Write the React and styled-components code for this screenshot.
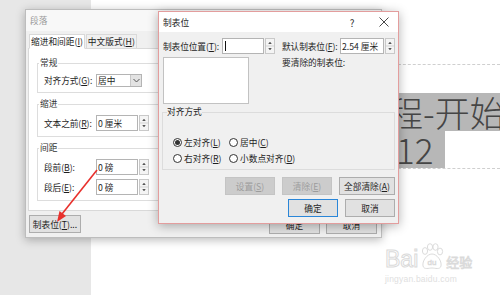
import React from 'react'
import styled, { createGlobalStyle } from 'styled-components'

const GlobalStyle = createGlobalStyle`
  html, body { margin: 0; padding: 0; }
  body {
    width: 500px;
    height: 295px;
    overflow: hidden;
    font-family: "Noto Sans CJK SC", "Noto Sans", sans-serif;
    font-size: 8.7px;
    color: #1e1e1e;
  }
  * { box-sizing: border-box; }
`

const Spinner = () => (
    <SpinBtns>
        <svg width="9" height="14" viewBox="0 0 9 14">
            <line x1="0" y1="7" x2="9" y2="7" stroke="#cfcfcf" />
            <polygon points="2.5,4.5 6.5,4.5 4.5,2.5" fill="#222" />
            <polygon points="2.5,9.5 6.5,9.5 4.5,11.5" fill="#222" />
        </svg>
    </SpinBtns>
)

const SpinField = ({value, width, caret}) => (
    <SpinBox $w={width}>
        <SpinText>{caret && <Caret />}{value}</SpinText>
        <Spinner />
    </SpinBox>
)

const Radio = ({checked, children}) => (
    <RadioItem>
        <RadioDot $checked={checked} />
        <span>{children}</span>
    </RadioItem>
)

const App = () => {
    return(
        <>
            <GlobalStyle />
            <Desktop>
                <SidePane />
                <Page>
                    <DocBlock>
                        <DocLine>程-开始</DocLine>
                        <DocLine2>12</DocLine2>
                    </DocBlock>
                </Page>

                <ParagraphDialog>
                    <TitleBar $inactive>段落</TitleBar>
                    <DialogBody>
                        <TabStrip>
                            <Tab $active>缩进和间距(<u>I</u>)</Tab>
                            <Tab>中文版式(<u>H</u>)</Tab>
                        </TabStrip>
                        <TabPanel>
                            <Group>
                                <Legend>常规</Legend>
                                <FormRow>
                                    <Label>对齐方式(<u>G</u>):</Label>
                                    <Select>
                                        <SelectText>居中</SelectText>
                                        <SelectArrow>
                                            <svg width="7" height="5" viewBox="0 0 7 5">
                                                <polyline points="0.5,1 3.5,4 6.5,1" fill="none" stroke="#555" strokeWidth="1" />
                                            </svg>
                                        </SelectArrow>
                                    </Select>
                                </FormRow>
                            </Group>
                            <Group>
                                <Legend>缩进</Legend>
                                <FormRow>
                                    <Label>文本之前(<u>R</u>):</Label>
                                    <SpinField value="0 厘米" width={53} />
                                </FormRow>
                            </Group>
                            <Group>
                                <Legend>间距</Legend>
                                <FormRow>
                                    <Label>段前(<u>B</u>):</Label>
                                    <SpinField value="0 磅" width={53} />
                                </FormRow>
                                <FormRow>
                                    <Label>段后(<u>E</u>):</Label>
                                    <SpinField value="0 磅" width={53} />
                                </FormRow>
                            </Group>
                        </TabPanel>
                        <Footer>
                            <Button $w={52}>制表位(<u>T</u>)...</Button>
                            <FooterRight>
                                <Button $w={51}>确定</Button>
                                <Button $w={51}>取消</Button>
                            </FooterRight>
                        </Footer>
                    </DialogBody>
                </ParagraphDialog>

                <TabsDialog>
                    <TitleBar>
                        <span>制表位</span>
                        <TitleButtons>
                            <HelpBtn>?</HelpBtn>
                            <CloseBtn>
                                <svg width="10" height="10" viewBox="0 0 10 10">
                                    <path d="M0.5 0.5 L9.5 9.5 M9.5 0.5 L0.5 9.5" stroke="#333" strokeWidth="0.9" />
                                </svg>
                            </CloseBtn>
                        </TitleButtons>
                    </TitleBar>
                    <TabsBody>
                        <TopGrid>
                            <div>
                                <InlineRow $label={59}>
                                    <Label>制表位位置(<u>T</u>):</Label>
                                    <SpinField value="" width={53} caret />
                                </InlineRow>
                                <ListBox />
                            </div>
                            <div>
                                <InlineRow $label={58}>
                                    <Label>默认制表位(<u>F</u>):</Label>
                                    <SpinField value="2.54 厘米" width={55} />
                                </InlineRow>
                                <ClearLabel>要清除的制表位:</ClearLabel>
                            </div>
                        </TopGrid>
                        <AlignGroup>
                            <AlignLegend>对齐方式</AlignLegend>
                            <RadioGrid>
                                <Radio checked>左对齐(<u>L</u>)</Radio>
                                <Radio>居中(<u>C</u>)</Radio>
                                <Radio>右对齐(<u>R</u>)</Radio>
                                <Radio>小数点对齐(<u>D</u>)</Radio>
                            </RadioGrid>
                        </AlignGroup>
                        <ButtonRow $top={7}>
                            <Button $w={50} disabled>设置(<u>S</u>)</Button>
                            <Button $w={50} disabled>清除(<u>E</u>)</Button>
                            <Button $w={56}>全部清除(<u>A</u>)</Button>
                        </ButtonRow>
                        <ButtonRow $top={4}>
                            <Button $w={50} $focus>确定</Button>
                            <Button $w={50}>取消</Button>
                        </ButtonRow>
                    </TabsBody>
                </TabsDialog>

                <ArrowLayer width="500" height="295" viewBox="0 0 500 295">
                    <line x1="97" y1="170" x2="62" y2="214" stroke="#e8302c" strokeWidth="1.6" />
                    <polygon points="57,222 66,216 59.5,211" fill="#e8302c" />
                </ArrowLayer>

                <Watermark>
                    <MarkTop>
                        <MarkBai>Bai</MarkBai>
                        <svg width="26" height="28" viewBox="0 0 26 28">
                            <g fill="none" stroke="#dcdcdc" strokeWidth="1">
                                <ellipse cx="6" cy="8" rx="2.6" ry="3.4" />
                                <ellipse cx="11" cy="4" rx="2.6" ry="3.3" />
                                <ellipse cx="16.5" cy="4" rx="2.6" ry="3.3" />
                                <ellipse cx="21" cy="8.5" rx="2.6" ry="3.4" />
                                <path d="M13 11 C8 11 3 18 4 23 C5 27 10 25 13 25 C16 25 21 27 22 23 C23 18 18 11 13 11 Z" />
                            </g>
                            <text x="13" y="22" textAnchor="middle" fontSize="8" fill="none" stroke="#d8d8d8" strokeWidth="0.6" fontFamily="Liberation Sans, sans-serif">du</text>
                        </svg>
                        <MarkJy>经验</MarkJy>
                    </MarkTop>
                    <MarkUrl>jingyan.baidu.com</MarkUrl>
                </Watermark>
            </Desktop>
        </>
    )
}

const Desktop = styled.div`
    position: relative;
    width: 500px;
    height: 295px;
    display: grid;
    grid-template-columns: 91px 1fr;
    overflow: hidden;
`

const SidePane = styled.div`
    background: #e7e7e7;
`

const Page = styled.div`
    background: #ffffff;
    padding-top: 64px;
    min-width: 0;
    overflow: hidden;
`

const DocBlock = styled.div`
    margin-left: 297px;
    border-top: 1px dashed #cfcfcf;
    border-bottom: 1px dashed #cfcfcf;
    padding-top: 28px;
    font-size: 35px;
    font-weight: 300;
    color: #454545;
    line-height: 37px;
    white-space: nowrap;
`

const DocLine = styled.div`
    background: #b7b7b7;
    height: 38px;
    line-height: 38px;
`

const DocLine2 = styled.div`
    display: inline-block;
    vertical-align: top;
    background: #b7b7b7;
    height: 37px;
    line-height: 35px;
    padding: 0 12px 0 8px;
`

const Window = styled.div`
    position: absolute;
    background: #f0f0f0;
    display: flex;
    flex-direction: column;
`

const ParagraphDialog = styled(Window)`
    left: 25px;
    top: 9px;
    width: 357px;
    height: 229px;
    border: 1px solid #bdbdbd;
    box-shadow: 0 2px 9px rgba(0,0,0,0.28);
`

const TabsDialog = styled(Window)`
    left: 158px;
    top: 11px;
    width: 241px;
    height: 213px;
    border: 1px solid #e39d9d;
    box-shadow: 0 2px 10px rgba(0,0,0,0.3);
`

const TitleBar = styled.div`
    height: ${p => p.$inactive ? 21 : 20}px;
    flex: none;
    display: flex;
    align-items: center;
    padding-left: 4px;
    background: ${p => p.$inactive ? '#f8f8f8' : '#ffffff'};
    color: ${p => p.$inactive ? '#9a9a9a' : '#1e1e1e'};
`

const TitleButtons = styled.div`
    margin-left: auto;
    display: flex;
    height: 100%;
`

const HelpBtn = styled.div`
    width: 36px;
    display: flex;
    align-items: center;
    justify-content: center;
    font-size: 10px;
    color: #333;
`

const CloseBtn = styled(HelpBtn)`
    width: 28px;
`

const Label = styled.span`
    white-space: nowrap;
    letter-spacing: -0.1px;
`

const DialogBody = styled.div`
    flex: 1;
    display: flex;
    flex-direction: column;
    padding: 0 4px 0 2px;
`

const TabStrip = styled.div`
    display: flex;
    margin: 3px 0 -1px 1px;
    position: relative;
    z-index: 1;
`

const Tab = styled.div`
    height: 15px;
    line-height: 14px;
    padding: 0 1px;
    white-space: nowrap;
    border: 1px solid #d9d9d9;
    border-bottom: ${p => p.$active ? '1px solid #fff' : '1px solid #d9d9d9'};
    background: ${p => p.$active ? '#ffffff' : '#f0f0f0'};
    margin-right: 1px;
`

const TabPanel = styled.div`
    height: 163px;
    background: #ffffff;
    border: 1px solid #d9d9d9;
    padding: 9px 8px 0;
    display: flex;
    flex-direction: column;
    gap: 6px;
`

const Group = styled.fieldset`
    margin: 0;
    min-width: 0;
    border: 1px solid #dddddd;
    padding: 6px 6px 5px;
    display: flex;
    flex-direction: column;
    gap: 4px;
`

const Legend = styled.legend`
    padding: 0 1px;
    margin-left: -5px;
    line-height: 10px;
    height: 10px;
    color: #333;
`

const FormRow = styled.div`
    display: grid;
    grid-template-columns: 52px auto;
    align-items: center;
    justify-items: start;
`

const Select = styled.div`
    width: 46px;
    height: 13px;
    border: 1px solid #b4b4b4;
    background: #fff;
    display: flex;
`

const SelectText = styled.div`
    flex: 1;
    padding-left: 1px;
    line-height: 11px;
`

const SelectArrow = styled.div`
    width: 11px;
    background: #e3e3e3;
    border-left: 1px solid #c8c8c8;
    display: flex;
    align-items: center;
    justify-content: center;
`

const SpinBox = styled.div`
    width: ${p => p.$w}px;
    height: 16px;
    display: flex;
    gap: 1px;
`

const SpinText = styled.div`
    flex: 1;
    background: #fff;
    border: 1px solid #b4b4b4;
    padding-left: 1px;
    line-height: 13px;
    white-space: nowrap;
    display: flex;
    align-items: center;
`

const Caret = styled.span`
    width: 1px;
    height: 10px;
    background: #111;
    margin-left: 1px;
`

const SpinBtns = styled.div`
    width: 10px;
    background: #f4f4f4;
    border: 1px solid #c9c9c9;
    display: flex;
    align-items: center;
    justify-content: center;
`

const Footer = styled.div`
    display: flex;
    align-items: flex-start;
    margin-top: 4px;
    padding-left: 1px;
`

const FooterRight = styled.div`
    margin-left: auto;
    margin-top: 1px;
    display: flex;
    gap: 6px;
`

const Button = styled.div`
    width: ${p => p.$w}px;
    height: 18px;
    flex: none;
    display: flex;
    align-items: center;
    justify-content: center;
    white-space: nowrap;
    background: ${p => p.disabled ? '#cccccc' : '#e1e1e1'};
    border: 1px solid ${p => p.disabled ? '#c4c4c4' : p.$focus ? '#2a86d8' : '#adadad'};
    color: ${p => p.disabled ? '#9c9c9c' : '#1e1e1e'};
`

const TabsBody = styled.div`
    flex: 1;
    display: flex;
    flex-direction: column;
    padding: 6px 3px 0 4px;
`

const TopGrid = styled.div`
    display: grid;
    grid-template-columns: 119px 1fr;
`

const InlineRow = styled.div`
    display: grid;
    grid-template-columns: ${p => p.$label}px auto;
    align-items: center;
    justify-items: start;
`

const ListBox = styled.div`
    width: 86px;
    height: 47px;
    margin-top: 3px;
    background: #fff;
    border: 1px solid #c2c2c2;
`

const ClearLabel = styled.div`
    margin-top: 3px;
    line-height: 12px;
`

const AlignGroup = styled.fieldset`
    margin: 3px 0 0 -1px;
    min-width: 0;
    border: 1px solid #dcdcdc;
    padding: 19px 10px 5px;
`

const AlignLegend = styled.legend`
    padding: 0;
    margin-left: -6px;
    height: 10px;
    line-height: 10px;
`

const RadioGrid = styled.div`
    display: grid;
    grid-template-columns: 56px auto;
    row-gap: 4px;
`

const RadioItem = styled.div`
    display: flex;
    align-items: center;
    gap: 2px;
    height: 12px;
    white-space: nowrap;
`

const RadioDot = styled.span`
    width: 9px;
    height: 9px;
    border-radius: 50%;
    border: 1px solid #333;
    background: #fff;
    display: flex;
    align-items: center;
    justify-content: center;
    &::after{
        content: '';
        width: 5px;
        height: 5px;
        border-radius: 50%;
        background: ${p => p.$checked ? '#333' : 'transparent'};
    }
`

const ButtonRow = styled.div`
    display: flex;
    justify-content: flex-end;
    gap: 7px;
    margin-top: ${p => p.$top}px;
`

const ArrowLayer = styled.svg`
    position: absolute;
    left: 0;
    top: 0;
    pointer-events: none;
`

const Watermark = styled.div`
    position: absolute;
    left: 385px;
    top: 243px;
    display: flex;
    flex-direction: column;
    align-items: flex-start;
`

const MarkTop = styled.div`
    display: flex;
    align-items: flex-end;
    gap: 1px;
`

const MarkBai = styled.span`
    font-family: "Liberation Sans", sans-serif;
    font-size: 23px;
    line-height: 24px;
    color: #fff;
    -webkit-text-stroke: 1px #dadada;
`

const MarkJy = styled.span`
    font-size: 13px;
    line-height: 18px;
    color: #fff;
    -webkit-text-stroke: 0.8px #dadada;
`

const MarkUrl = styled.span`
    font-family: "Liberation Sans", sans-serif;
    font-size: 8.5px;
    color: #e0e0e0;
    margin-top: 3px;
    letter-spacing: 0.2px;
`

export default App
